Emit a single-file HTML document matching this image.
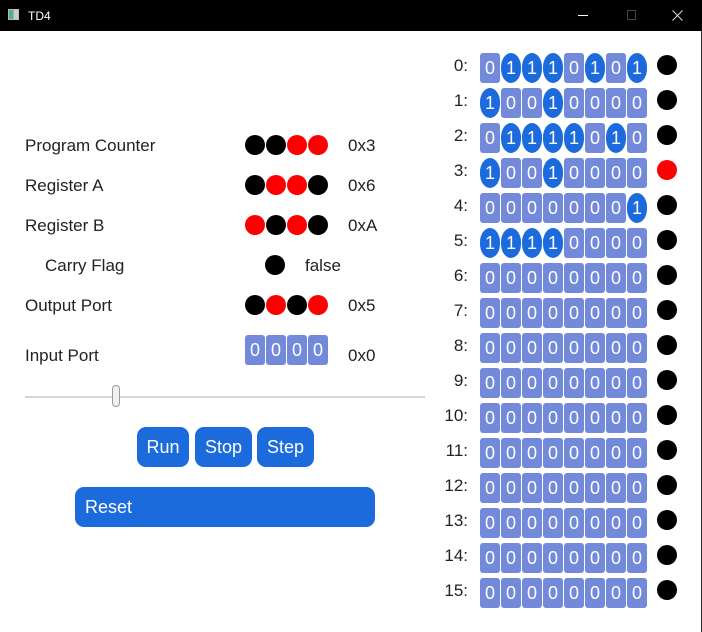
<!DOCTYPE html>
<html><head><style>
*{margin:0;padding:0;box-sizing:border-box}
body{width:702px;height:632px;background:#fff;position:relative;overflow:hidden;font-family:"Liberation Sans",sans-serif;color:#222}
.tb{position:absolute;left:0;top:0;width:702px;height:31px;background:#000;color:#fff;font-size:12px}
.a{position:absolute}
.l{position:absolute;font-size:17px;line-height:20px}
.d{position:absolute;width:20px;height:20px;border-radius:50%;background:#000}
.r{background:#f00}
.row{position:absolute;left:480px;display:flex;gap:1px;height:30px}
.row span{width:20px;height:30px;background:#7389da;color:#fff;font-size:18px;text-align:center;line-height:30px;border-radius:3px}
.row span.o{background:#1c6bdc;border-radius:10px/14px}
.ml{position:absolute;width:30px;left:438px;text-align:right;font-size:17px}
.btn{position:absolute;background:#1c6bdc;color:#fff;font-size:18px;border-radius:9px;text-align:center;line-height:40px;height:40px;top:427px}
.mr .d{margin-top:2px}
</style></head><body>
<div class="tb">
<div class="a" style="left:8px;top:9px;width:11px;height:11px;border:1px solid #bbb;background:linear-gradient(90deg,#5a9 50%,#ccc 50%)"></div>
<div class="a" style="left:28px;top:9px">TD4</div>
<div class="a" style="left:578px;top:15px;width:10px;height:1px;background:#fff"></div>
<div class="a" style="left:627px;top:10px;width:9px;height:10px;border:1px solid #444"></div>
<svg class="a" style="left:672px;top:10px" width="11" height="11"><path d="M0.5 0.5L10.5 10.5M10.5 0.5L0.5 10.5" stroke="#ddd" stroke-width="1"/></svg>
</div>
<div class="a" style="right:0;top:31px;width:1px;height:601px;background:#333"></div>

<div class="l" style="left:25px;top:136px">Program Counter</div>
<div class="d" style="left:245px;top:135px"></div><div class="d" style="left:266px;top:135px"></div><div class="d r" style="left:287px;top:135px"></div><div class="d r" style="left:308px;top:135px"></div>
<div class="l" style="left:348px;top:136px">0x3</div>

<div class="l" style="left:25px;top:176px">Register A</div>
<div class="d" style="left:245px;top:175px"></div><div class="d r" style="left:266px;top:175px"></div><div class="d r" style="left:287px;top:175px"></div><div class="d" style="left:308px;top:175px"></div>
<div class="l" style="left:348px;top:176px">0x6</div>

<div class="l" style="left:25px;top:216px">Register B</div>
<div class="d r" style="left:245px;top:215px"></div><div class="d" style="left:266px;top:215px"></div><div class="d r" style="left:287px;top:215px"></div><div class="d" style="left:308px;top:215px"></div>
<div class="l" style="left:348px;top:216px">0xA</div>

<div class="l" style="left:45px;top:256px">Carry Flag</div>
<div class="d" style="left:265px;top:255px"></div>
<div class="l" style="left:305px;top:256px">false</div>

<div class="l" style="left:25px;top:296px">Output Port</div>
<div class="d" style="left:245px;top:295px"></div><div class="d r" style="left:266px;top:295px"></div><div class="d" style="left:287px;top:295px"></div><div class="d r" style="left:308px;top:295px"></div>
<div class="l" style="left:348px;top:296px">0x5</div>

<div class="l" style="left:25px;top:346px">Input Port</div>
<div class="row" style="left:245px;top:335px"><span>0</span><span>0</span><span>0</span><span>0</span></div>
<div class="l" style="left:348px;top:346px">0x0</div>

<div class="a" style="left:25px;top:396px;width:400px;height:2px;background:#d6d6d6"></div>
<div class="a" style="left:112px;top:385px;width:8px;height:22px;border:1px solid #999;border-radius:4px;background:#f0f0f0"></div>

<div class="btn" style="left:137px;width:52px">Run</div>
<div class="btn" style="left:195px;width:57px">Stop</div>
<div class="btn" style="left:257px;width:57px">Step</div>
<div class="btn" style="left:75px;top:487px;width:300px;text-align:left;padding-left:10px">Reset</div>

<div class="mr">
<div class="ml" style="top:56px">0:</div><div class="row" style="top:53px"><span>0</span><span class="o">1</span><span class="o">1</span><span class="o">1</span><span>0</span><span class="o">1</span><span>0</span><span class="o">1</span></div><div class="d" style="left:657px;top:53px"></div>
<div class="ml" style="top:91px">1:</div><div class="row" style="top:88px"><span class="o">1</span><span>0</span><span>0</span><span class="o">1</span><span>0</span><span>0</span><span>0</span><span>0</span></div><div class="d" style="left:657px;top:88px"></div>
<div class="ml" style="top:126px">2:</div><div class="row" style="top:123px"><span>0</span><span class="o">1</span><span class="o">1</span><span class="o">1</span><span class="o">1</span><span>0</span><span class="o">1</span><span>0</span></div><div class="d" style="left:657px;top:123px"></div>
<div class="ml" style="top:161px">3:</div><div class="row" style="top:158px"><span class="o">1</span><span>0</span><span>0</span><span class="o">1</span><span>0</span><span>0</span><span>0</span><span>0</span></div><div class="d r" style="left:657px;top:158px"></div>
<div class="ml" style="top:196px">4:</div><div class="row" style="top:193px"><span>0</span><span>0</span><span>0</span><span>0</span><span>0</span><span>0</span><span>0</span><span class="o">1</span></div><div class="d" style="left:657px;top:193px"></div>
<div class="ml" style="top:231px">5:</div><div class="row" style="top:228px"><span class="o">1</span><span class="o">1</span><span class="o">1</span><span class="o">1</span><span>0</span><span>0</span><span>0</span><span>0</span></div><div class="d" style="left:657px;top:228px"></div>
<div class="ml" style="top:266px">6:</div><div class="row" style="top:263px"><span>0</span><span>0</span><span>0</span><span>0</span><span>0</span><span>0</span><span>0</span><span>0</span></div><div class="d" style="left:657px;top:263px"></div>
<div class="ml" style="top:301px">7:</div><div class="row" style="top:298px"><span>0</span><span>0</span><span>0</span><span>0</span><span>0</span><span>0</span><span>0</span><span>0</span></div><div class="d" style="left:657px;top:298px"></div>
<div class="ml" style="top:336px">8:</div><div class="row" style="top:333px"><span>0</span><span>0</span><span>0</span><span>0</span><span>0</span><span>0</span><span>0</span><span>0</span></div><div class="d" style="left:657px;top:333px"></div>
<div class="ml" style="top:371px">9:</div><div class="row" style="top:368px"><span>0</span><span>0</span><span>0</span><span>0</span><span>0</span><span>0</span><span>0</span><span>0</span></div><div class="d" style="left:657px;top:368px"></div>
<div class="ml" style="top:406px">10:</div><div class="row" style="top:403px"><span>0</span><span>0</span><span>0</span><span>0</span><span>0</span><span>0</span><span>0</span><span>0</span></div><div class="d" style="left:657px;top:403px"></div>
<div class="ml" style="top:441px">11:</div><div class="row" style="top:438px"><span>0</span><span>0</span><span>0</span><span>0</span><span>0</span><span>0</span><span>0</span><span>0</span></div><div class="d" style="left:657px;top:438px"></div>
<div class="ml" style="top:476px">12:</div><div class="row" style="top:473px"><span>0</span><span>0</span><span>0</span><span>0</span><span>0</span><span>0</span><span>0</span><span>0</span></div><div class="d" style="left:657px;top:473px"></div>
<div class="ml" style="top:511px">13:</div><div class="row" style="top:508px"><span>0</span><span>0</span><span>0</span><span>0</span><span>0</span><span>0</span><span>0</span><span>0</span></div><div class="d" style="left:657px;top:508px"></div>
<div class="ml" style="top:546px">14:</div><div class="row" style="top:543px"><span>0</span><span>0</span><span>0</span><span>0</span><span>0</span><span>0</span><span>0</span><span>0</span></div><div class="d" style="left:657px;top:543px"></div>
<div class="ml" style="top:581px">15:</div><div class="row" style="top:578px"><span>0</span><span>0</span><span>0</span><span>0</span><span>0</span><span>0</span><span>0</span><span>0</span></div><div class="d" style="left:657px;top:578px"></div>
</div>
</body></html>
